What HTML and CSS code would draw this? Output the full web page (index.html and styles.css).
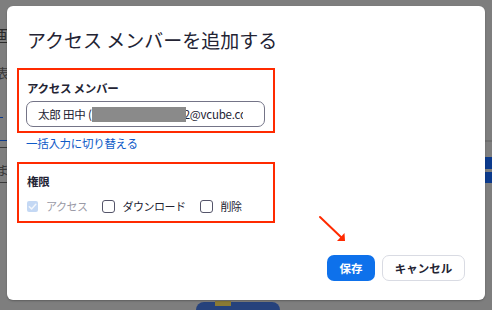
FILE: index.html
```html
<!DOCTYPE html>
<html lang="ja">
<head>
<meta charset="utf-8">
<link rel="stylesheet" href="styles.css">
</head>
<body>
<div class="page-behind">
  <span class="bg-char bg-c1">画</span>
  <span class="bg-char bg-c2">表</span>
  <span class="bg-line bg-l1"></span>
  <span class="bg-line bg-l2"></span>
  <span class="bg-line bg-l3"></span>
  <span class="bg-char bg-c3">ま</span>
  <span class="bg-line bg-l4"></span>
  <span class="bg-r bg-r1"></span>
  <span class="bg-r bg-r2"></span>
  <span class="bg-r bg-r3"></span>
  <span class="bg-fig"></span>
  <span class="bg-fig-y"></span>
</div>
<div class="modal">
  <h1 class="title">アクセス メンバーを追加する</h1>
  <section class="box box-members">
    <div class="label">アクセス メンバー</div>
    <div class="input">
      <div class="input-inner">太郎 田中 (<span class="redact"></span>2@vcube.com)</div>
    </div>
  </section>
  <a class="link">一括入力に切り替える</a>
  <section class="box box-perm">
    <div class="label">権限</div>
    <div class="checks">
      <label class="check disabled">
        <span class="cb cb-on">
          <svg viewBox="0 0 12 12" width="11" height="11"><path d="M2.5 6.2 L5 8.6 L9.6 3.6" fill="none" stroke="#f4f7fc" stroke-width="1.6" stroke-linecap="round" stroke-linejoin="round"/></svg>
        </span>
        <span class="check-text">アクセス</span>
      </label>
      <label class="check">
        <span class="cb"></span>
        <span class="check-text">ダウンロード</span>
      </label>
      <label class="check">
        <span class="cb"></span>
        <span class="check-text">削除</span>
      </label>
    </div>
  </section>
  <div class="actions">
    <button class="btn btn-primary">保存</button>
    <button class="btn btn-secondary">キャンセル</button>
  </div>
  <svg class="arrow" width="40" height="40" viewBox="0 0 40 40">
    <line x1="4" y1="4" x2="27" y2="26" stroke="#ff2a00" stroke-width="2" stroke-linecap="round"/>
    <path d="M21 28 L29 28 L28.5 20 Z" fill="#ff2a00"/>
  </svg>
</div>
</body>
</html>
```

FILE: styles.css
```css
* { box-sizing: border-box; }
html, body { margin: 0; padding: 0; }
body {
  width: 492px;
  height: 310px;
  overflow: hidden;
  background: #7e7e7e;
  font-family: "Noto Sans CJK JP", "Noto Sans", sans-serif;
  color: #232333;
  position: relative;
  padding: 6px 7px 0 7px;
}
.page-behind { position: absolute; inset: 0; }
.bg-char { position: absolute; left: -4px; font-size: 13px; color: #2b2b2b; line-height: 14px; }
.bg-c1 { top: 28px; font-size: 16px; left: -6px; }
.bg-c2 { top: 66px; color: #3a3a3a; }
.bg-c3 { top: 163px; color: #3a3a3a; }
.bg-line { position: absolute; left: 0; width: 7px; height: 1px; }
.bg-l1 { top: 117px; width: 3px; background: #0c3a8c; }
.bg-l2 { top: 140px; background: #0c3a8c; }
.bg-l3 { top: 147px; background: #3a3a3a; }
.bg-l4 { top: 182px; background: #3a3a3a; }
.bg-r { position: absolute; left: 485px; width: 7px; }
.bg-r1 { top: 140px; height: 2px; background: #707070; }
.bg-r2 { top: 157px; height: 12px; background: #0c3a8c; }
.bg-r3 { top: 172px; height: 11px; background: #0c3a8c; }
.bg-fig { position: absolute; left: 196px; top: 302px; width: 84px; height: 12px; background: #26427c; border-radius: 8px 8px 0 0; }
.bg-fig-y { position: absolute; left: 215px; top: 301px; width: 16px; height: 5px; background: #8a7a35; }

.modal {
  position: relative;
  width: 478px;
  height: 294px;
  background: #ffffff;
  border-radius: 6px;
  box-shadow: 0 1px 2px rgba(0,0,0,0.25);
  padding: 22px 20px 0 10px;
  display: flex;
  flex-direction: column;
}
.title {
  margin: 0 0 0 10px;
  font-size: 19px;
  font-weight: 400;
  line-height: 24px;
  color: #232333;
}
.box {
  width: 258px;
  border: 2px solid #ff2a00;
  padding-left: 8px;
}
.box-members {
  margin-top: 16px;
  height: 65px;
  padding-top: 9px;
}
.label {
  font-size: 11.5px;
  font-weight: 700;
  line-height: 18px;
  letter-spacing: -0.3px;
  color: #232333;
}
.input {
  display: block;
  margin-top: 4px;
  margin-left: -1px;
  width: 239px;
  height: 26px;
  border: 1px solid #747487;
  border-radius: 7px;
  padding: 4px 0 0 11px;
}
.input-inner {
  width: 205px;
  overflow: hidden;
  white-space: nowrap;
  font-size: 11.5px;
  letter-spacing: -0.2px;
  line-height: 16px;
  color: #232333;
}
.redact {
  display: inline-block;
  width: 94px;
  height: 15px;
  vertical-align: -3px;
  background: #8a8a8a;
  margin-left: 0;
  margin-right: -2px;
  position: relative;
}
.link {
  margin: 2px 0 0 9px;
  font-size: 11.5px;
  line-height: 16px;
  letter-spacing: -0.3px;
  color: #0e5bc8;
}
.box-perm {
  margin-top: 11px;
  height: 61px;
  padding-top: 8px;
}
.checks {
  margin-top: 7px;
  display: flex;
  align-items: center;
  gap: 15px;
  height: 18px;
}
.check {
  display: flex;
  align-items: center;
  gap: 7px;
  font-size: 11px;
  letter-spacing: -0.5px;
  color: #232333;
}
.check.disabled .check-text { color: #9a9aa6; }
.check.disabled { gap: 8px; }
.cb {
  width: 13px;
  height: 13px;
  border: 1.5px solid #55556a;
  border-radius: 3px;
  display: inline-flex;
  align-items: center;
  justify-content: center;
}
.cb-on {
  width: 11px;
  height: 11px;
  border: none;
  background: #c4d8f4;
  border-radius: 2px;
}
.actions {
  margin-top: auto;
  margin-bottom: 19px;
  display: flex;
  justify-content: flex-end;
  gap: 7px;
}
.btn {
  height: 26px;
  border-radius: 7px;
  font-family: inherit;
  font-size: 11.5px;
  font-weight: 700;
  line-height: 16px;
  padding: 0;
  cursor: pointer;
}
.btn-primary {
  width: 48px;
  background: #0e71eb;
  color: #ffffff;
  border: none;
}
.btn-secondary {
  width: 83px;
  background: #ffffff;
  color: #232333;
  border: 1px solid #d9dbe3;
}
.arrow {
  position: absolute;
  left: 309px;
  top: 207px;
}
```
